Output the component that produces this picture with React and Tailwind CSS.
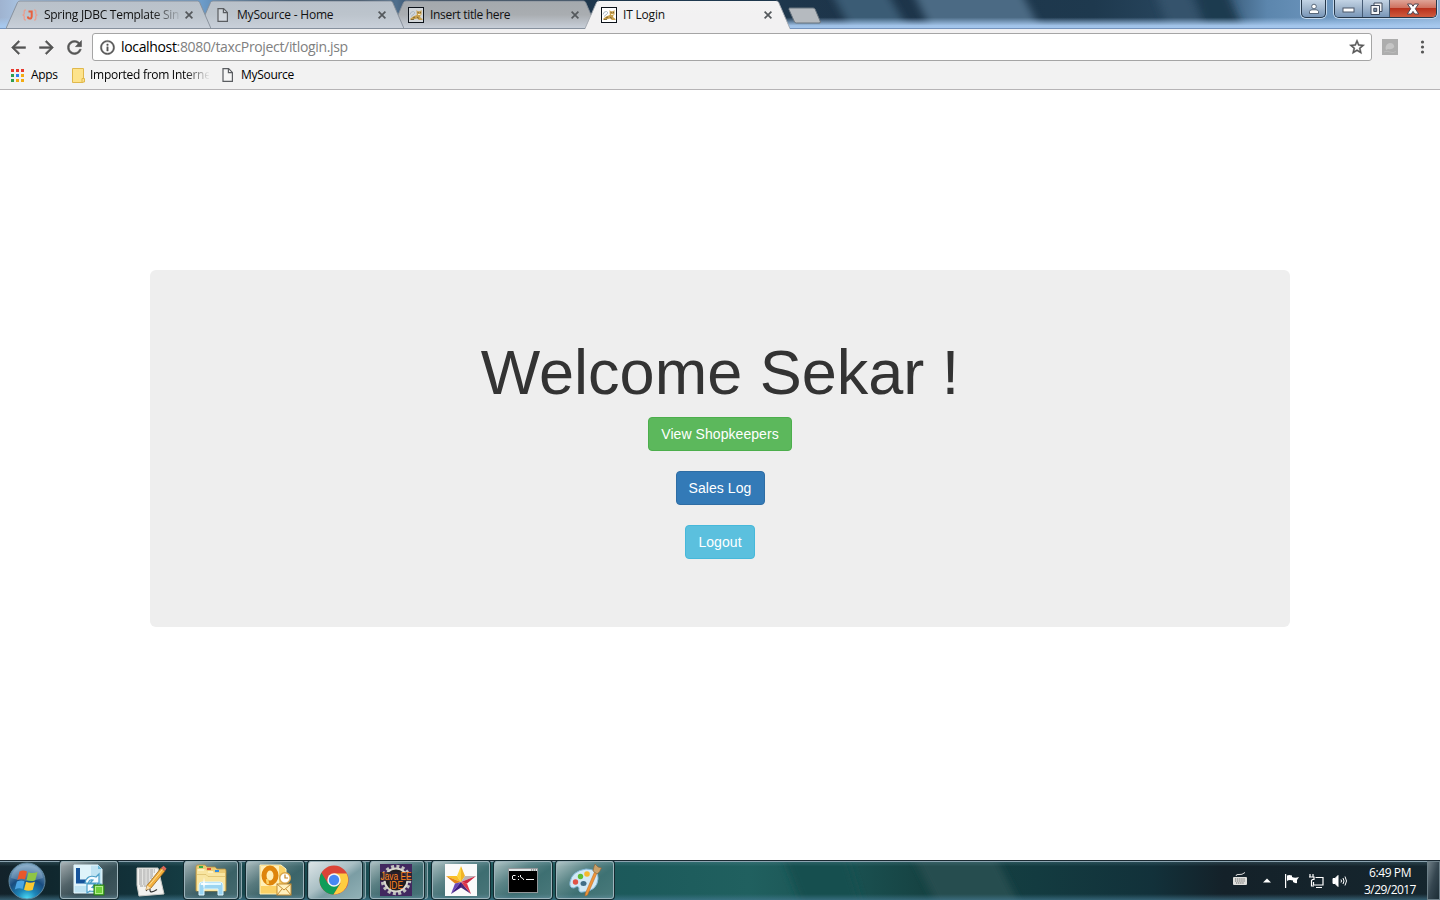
import React from "react";

const uiFont = "font-['Open_Sans','Noto_Sans',sans-serif]";

function TitleGlass() {
  return (
    <svg className="absolute inset-0" width="1440" height="29" viewBox="0 0 1440 29" preserveAspectRatio="none" aria-hidden="true">
      <defs>
        <linearGradient id="tg" x1="0" x2="1440" y1="0" y2="0" gradientUnits="userSpaceOnUse">
          <stop offset="0" stopColor="#9fb3d0" />
          <stop offset="0.015" stopColor="#a9c4e2" />
          <stop offset="0.06" stopColor="#86aed8" />
          <stop offset="0.14" stopColor="#6d9cc9" />
          <stop offset="0.2" stopColor="#24445f" />
          <stop offset="0.25" stopColor="#2a4158" />
          <stop offset="0.275" stopColor="#4f6f8d" />
          <stop offset="0.3" stopColor="#1c3146" />
          <stop offset="0.48" stopColor="#1f3a50" />
          <stop offset="0.6" stopColor="#1d3449" />
          <stop offset="0.76" stopColor="#1e394e" />
          <stop offset="0.84" stopColor="#2c4b65" />
          <stop offset="0.88" stopColor="#5c86ad" />
          <stop offset="0.93" stopColor="#7099c1" />
          <stop offset="1" stopColor="#8db1d6" />
        </linearGradient>
        <linearGradient id="tglow" x1="0" x2="0" y1="0" y2="1">
          <stop offset="0.6" stopColor="#a6c8ee" stopOpacity="0" />
          <stop offset="0.88" stopColor="#a6c8ee" stopOpacity="0.95" />
          <stop offset="1" stopColor="#a6c8ee" />
        </linearGradient>
        <filter id="tb" x="-20%" y="-50%" width="140%" height="200%">
          <feGaussianBlur stdDeviation="5 1" />
        </filter>
      </defs>
      <rect width="1440" height="29" fill="url(#tg)" />
      <g filter="url(#tb)">
        <polygon points="832,-6 888,-6 910,32 852,32" fill="#3b5b74" />
        <polygon points="914,-6 1022,-6 1042,32 932,32" fill="#4c6a84" />
        <polygon points="1156,-6 1190,-6 1206,32 1170,32" fill="#34536c" />
        <polygon points="1194,-6 1228,-6 1244,32 1206,32" fill="#1f3a50" />
      </g>
      <rect width="1440" height="29" fill="url(#tglow)" />
      <rect y="28" width="1440" height="1" fill="#7493bd" />
    </svg>
  );
}

function SpringIcon() {
  return (
    <svg width="16" height="16" viewBox="0 0 16 16" fill="none">
      <path d="M3.800 3Q2 3 2.200 5Q2.600 8 .6 8Q2.600 8 2.200 11Q2 13 3.800 13M12.200 3Q14 3 13.800 5Q13.400 8 15.400 8Q13.400 8 13.800 11Q14 13 12.200 13" stroke="#ea9d8e" strokeWidth="1.300" />
      <path d="M6.500 4.500H9.700V9.500Q9.500 11.800 7.600 11.600Q5.900 11.500 5.900 9.500" stroke="#e8603f" strokeWidth="2" />
    </svg>
  );
}

function FileIcon() {
  return (
    <svg width="16" height="16" viewBox="0 0 16 16" fill="none" stroke="#5a5d61" strokeWidth="1.200">
      <path d="M3 1.600H8.600L12.400 5.400V14.400H3Z" fill="#ffffff" fillOpacity=".3" />
      <path d="M8.400 1.900V5.600H12.300" />
    </svg>
  );
}

function TomcatIcon({ active }) {
  return (
    <svg width="16" height="16" viewBox="0 0 16 16">
      <rect x=".5" y=".5" width="15" height="15" fill={active ? "#fff" : "#d3d7da"} stroke="#0c1219" strokeWidth="1" />
      <path d="M8.500 3L9.800 4.300H12L13.500 3V7.500L12 9L12.500 10.500L14.500 12V13H11L9 11.500L5 12.500L2.500 13L2 12L5 9.500L8.800 8Z" fill="#c9a04c" />
      <path d="M2 7.500Q3 4 5.500 4.500Q7 5 6.500 6.500L3 9.500" stroke="#a9b6c0" strokeWidth="1" fill="none" />
      <path d="M9.700 5.500H10.700M12 5.500H13M5 11L7 10M9 10L11 11.500M3 12.500H6" stroke="#6d5b2e" strokeWidth=".8" />
      <path d="M10 7.500H12.500" stroke="#f7efd0" strokeWidth="1" />
    </svg>
  );
}

function CloseX() {
  return (
    <svg width="8" height="8" viewBox="0 0 8 8" stroke="#54585c" strokeWidth="1.700">
      <path d="M.6.6L7.400 7.400M7.400.6L.6 7.400" />
    </svg>
  );
}

function Tab({ title, icon, active, layer, fill, tracking, fade }) {
  return (
    <div className={`relative flex h-[29px] w-[205px] shrink-0 items-center pl-4 ${layer}`}>
      <svg className="absolute inset-0" width="205" height="29" viewBox="0 0 205 29" aria-hidden="true">
        <defs>
          <linearGradient id={fill} x1="0" x2="0" y1="0" y2="1">
            <stop offset="0" stopColor={active ? "#f3f3f3" : fill === "tabC" ? "#a4a9ad" : "#b9c1ca"} />
            <stop offset=".5" stopColor={active ? "#f2f1f2" : fill === "tabC" ? "#a9adb1" : "#bcc4cc"} />
            <stop offset="1" stopColor={active ? "#f2f1f2" : "#c9d0da"} />
          </linearGradient>
        </defs>
        <path d={active ? "M0 29L11.500 2.500Q12.300 1 14 1H191.500Q193 1 193.700 2.500L205 29Z" : "M0 28.500L11.500 2.500Q12.300 1 14 1H191.500Q193 1 193.700 2.500L205 28.500Z"} fill={`url(#${fill})`} />
        <path d={active ? "M0 28.500L11.500 2.500Q12.300 1 14 1M191.500 1Q193 1 193.700 2.500L205 28.500" : "M205 28.500H0L11.500 2.500Q12.300 1 14 1H191.500Q193 1 193.700 2.500L205 28.500"} fill="none" stroke={active ? "#a3a8af" : "#858d99"} strokeWidth=".9" />
      </svg>
      <span className="relative">{icon}</span>
      <span className={`relative ml-[6px] w-[136px] text-[12px] leading-[18px] whitespace-nowrap text-[#111] ${tracking} ${fade ? "[mask-image:linear-gradient(to_right,black_108px,transparent_138px)]" : ""}`}>{title}</span>
      <span className="relative ml-[5px]"><CloseX /></span>
    </div>
  );
}

function WindowControls() {
  const glass = "bg-linear-to-b from-[#c3d4e5] via-[#a3b8ce] via-45% to-[#7896b8]";
  return (
    <div className="relative ml-auto flex h-[19px] pr-[3px]">
      <div className={`mr-[6px] flex h-[18px] w-[25px] items-center justify-center rounded-b-[5px] border border-t-0 border-[#26384a] shadow-[0_0_0_1px_#c4d8ec] ${glass}`}>
        <svg width="12" height="12" viewBox="0 0 12 12" fill="#fff" stroke="#3c4c60" strokeWidth=".8">
          <circle cx="6" cy="3.500" r="2.300" />
          <path d="M1.500 10.500V8.500Q2 6.800 4 6.800H8Q10 6.800 10.500 8.500V10.500Z" />
        </svg>
      </div>
      <div className="ml-[2px] flex h-[18px] overflow-hidden rounded-b-[5px] border border-t-0 border-[#26384a] shadow-[0_0_0_1px_#c4d8ec]">
        <div className={`flex w-[28px] items-center justify-center border-r border-[#455b74] pt-[3px] ${glass}`}>
          <svg width="13" height="6" viewBox="0 0 13 6"><rect x="1" y="1" width="11" height="4" fill="#fff" stroke="#4b5668" /></svg>
        </div>
        <div className={`flex w-[27px] items-center justify-center border-r border-[#455b74] ${glass}`}>
          <svg width="13" height="13" viewBox="0 0 13 13" fill="#f4f6f8" stroke="#3f4a5c" strokeWidth="1">
            <path d="M4 1H12V9.500H4Z" /><path d="M1 3.500H9.500V12.500H1Z" /><path d="M3.800 6.300H6.700V9.500H3.800Z" fill="#7b8fa8" />
          </svg>
        </div>
        <div className="flex w-[46px] items-center justify-center bg-[linear-gradient(to_bottom,#dfa497_0%,#cf7260_45%,#b9321d_50%,#cf5b3e_100%)]">
          <svg width="14" height="12" viewBox="0 0 14 12"><path d="M1.500 1H5.500L7 3.300L8.500 1H12.500L9.300 5.700L12.700 11H8.700L7 8.400L5.300 11H1.300L4.700 5.700Z" fill="#fff" stroke="#4f4652" strokeWidth="1" /></svg>
        </div>
      </div>
    </div>
  );
}

function MaterialIcon({ d, size }) {
  return <svg width={size} height={size} viewBox="0 0 24 24" fill="#555" stroke="#555" strokeWidth=".6"><path d={d} /></svg>;
}

const paths = {
  back: "M20 11H7.83l5.59-5.59L12 4l-8 8 8 8 1.41-1.41L7.83 13H20v-2z",
  forward: "M12 4l-1.41 1.41L16.17 11H4v2h12.17l-5.58 5.59L12 20l8-8z",
  reload: "M17.65 6.35C16.2 4.9 14.21 4 12 4c-4.42 0-7.99 3.58-7.99 8s3.57 8 7.99 8c3.73 0 6.84-2.55 7.73-6h-2.08c-.82 2.33-3.04 4-5.65 4-3.31 0-6-2.69-6-6s2.69-6 6-6c1.66 0 3.14.69 4.22 1.78L13 11h7V4l-2.35 2.35z",
  info: "M11 17h2v-6h-2v6zm1-15C6.48 2 2 6.48 2 12s4.48 10 10 10 10-4.48 10-10S17.52 2 12 2zm0 18c-4.41 0-8-3.59-8-8s3.59-8 8-8 8 3.59 8 8-3.59 8-8 8zM11 9h2V7h-2v2z",
  star: "M22 9.24l-7.19-.62L12 2 9.19 8.63 2 9.24l5.46 4.73L5.82 21 12 17.27 18.18 21l-1.63-7.03L22 9.24zM12 15.400l-3.760 2.270 1-4.280-3.320-2.880 4.380-.380L12 6.100l1.710 4.040 4.380.380-3.320 2.880 1 4.280L12 15.400z",
};

function Toolbar() {
  return (
    <div className="flex h-8 items-center bg-[#f2f1f2] pt-1 pl-[7.5px]">
      <div className="flex w-[84.500px] items-center gap-[7px]">
        <MaterialIcon d={paths.back} size="21" />
        <MaterialIcon d={paths.forward} size="21" />
        <MaterialIcon d={paths.reload} size="21" />
      </div>
      <div className="flex h-7 w-[1280px] items-center rounded-[3px] border border-[#a5a5a5] bg-white pr-[5px] pl-[5.500px]">
        <MaterialIcon d={paths.info} size="17" />
        <span className="ml-[5.500px] text-[14px] leading-5 tracking-[-0.34px] text-[#808080]"><span className="text-black">localhost</span>:8080/taxcProject/itlogin.jsp</span>
        <span className="ml-auto"><MaterialIcon d={paths.star} size="18" /></span>
      </div>
      <svg className="ml-[10px]" width="16" height="16" viewBox="0 0 16 16">
        <rect width="16" height="16" fill="#adadad" />
        <path d="M3.500 9Q4 4.500 8 4Q12 4.200 12.300 8Q10 11 6 10L4 11Z" fill="#c5c5c5" />
        <path d="M2 13Q5 11.500 8 13T14 12.500" stroke="#bbb" fill="none" />
      </svg>
      <svg className="ml-[22px]" width="5" height="14" viewBox="0 0 5 14" fill="#555"><circle cx="2.500" cy="2" r="1.600" /><circle cx="2.500" cy="7" r="1.600" /><circle cx="2.500" cy="12" r="1.600" /></svg>
    </div>
  );
}

function Bookmarks() {
  const dots = ["#e8392f", "#e8392f", "#e8392f", "#2e9e4f", "#2d7ff0", "#f3ab10", "#2e9e4f", "#f3ab10", "#f3ab10"];
  return (
    <div className="flex h-[29px] items-center border-b border-[#b6b4b6] bg-[#f2f2f2] pl-[11px] text-[12px] leading-[18px] text-black">
      <div className="grid grid-cols-3 gap-[2px]">
        {dots.map((c, i) => <span key={i} className="size-[3px]" style={{ backgroundColor: c }} />)}
      </div>
      <span className="ml-[7px] w-[41px] tracking-[-0.3px]">Apps</span>
      <svg width="13" height="15" viewBox="0 0 13 15"><path d="M.5.5H11.500V10L12.500 10.500V14H11V14.500H.5Z" fill="#fde38c" stroke="#e0b84c" /><path d="M10 14V10.500H12" stroke="#e0b84c" fill="none" /></svg>
      <span className="ml-[5px] w-[119px] whitespace-nowrap tracking-[-0.28px] [mask-image:linear-gradient(to_right,black_94px,transparent_120px)]">Imported from Interne</span>
      <span className="ml-[11px]"><FileIcon /></span>
      <span className="ml-[5px] tracking-[-0.3px]">MySource</span>
    </div>
  );
}

function WelcomePage() {
  const btn = "h-[34px] rounded-[4px] border text-[14px] leading-5 tracking-[0.06px] text-white";
  return (
    <main className="h-[770px] bg-white px-[150px] pt-[180px] font-['Liberation_Sans',Arial,sans-serif]">
      <section className="flex h-[357px] flex-col items-center rounded-[6px] bg-[#eee] pt-[68px]">
        <h1 className="mb-[10px] h-[69px] text-[63px] leading-[69px] font-normal whitespace-nowrap text-[#333]">Welcome Sekar !</h1>
        <div className="flex flex-col items-center gap-5">
          <button className={`${btn} w-[144px] border-[#4cae4c] bg-[#5cb85c]`}>View Shopkeepers</button>
          <button className={`${btn} w-[89px] border-[#2e6da4] bg-[#337ab7]`}>Sales Log</button>
          <button className={`${btn} w-[70px] border-[#46b8da] bg-[#5bc0de]`}>Logout</button>
        </div>
      </section>
    </main>
  );
}

function TaskbarGlass() {
  return (
    <svg className="absolute inset-0" width="1440" height="40" viewBox="0 0 1440 40" aria-hidden="true">
      <defs>
        <linearGradient id="kg" x1="0" x2="1440" y1="0" y2="0" gradientUnits="userSpaceOnUse">
          <stop offset="0" stopColor="#13222a" />
          <stop offset=".035" stopColor="#10272e" />
          <stop offset=".09" stopColor="#123139" />
          <stop offset=".16" stopColor="#17454b" />
          <stop offset=".3" stopColor="#1c5257" />
          <stop offset=".44" stopColor="#1c5a5b" />
          <stop offset=".52" stopColor="#20605f" />
          <stop offset=".58" stopColor="#1b5454" />
          <stop offset=".64" stopColor="#164343" />
          <stop offset=".72" stopColor="#133b40" />
          <stop offset=".8" stopColor="#12313a" />
          <stop offset=".85" stopColor="#142129" />
          <stop offset="1" stopColor="#15262e" />
        </linearGradient>
        <linearGradient id="kb" x1="0" x2="0" y1="0" y2="1">
          <stop offset="0" stopColor="#6e9aa8" stopOpacity=".35" />
          <stop offset=".16" stopColor="#6e9aa8" stopOpacity="0" />
          <stop offset=".85" stopColor="#467b93" stopOpacity="0" />
          <stop offset="1" stopColor="#467b93" stopOpacity=".65" />
        </linearGradient>
        <filter id="kf"><feGaussianBlur stdDeviation="4 1" /></filter>
      </defs>
      <rect width="1440" height="40" fill="url(#kg)" />
      <g filter="url(#kf)">
        <polygon points="912,-6 994,-6 1020,46 938,46" fill="#264e50" />
        <polygon points="782,-6 846,-6 862,46 802,46" fill="#195050" />
      </g>
      <rect width="1440" height="40" fill="url(#kb)" />
      <rect width="1440" height="1" fill="#1a2831" />
      <rect y="1" width="1440" height="1" fill="#8ba3b0" />
    </svg>
  );
}

function StartOrb() {
  return (
    <svg width="38" height="38" viewBox="0 0 38 38">
      <defs>
        <radialGradient id="orb" cx=".5" cy="1" r=".95">
          <stop offset="0" stopColor="#4fe0f8" /><stop offset=".28" stopColor="#1d86b9" /><stop offset=".6" stopColor="#194c7f" /><stop offset="1" stopColor="#7fa6c4" />
        </radialGradient>
      </defs>
      <circle cx="19" cy="19" r="18" fill="url(#orb)" stroke="#5f869d" />
      <path d="M3 16Q5 4 19 3Q33 4 35 16Q19 22 3 16Z" fill="#c6dcec" fillOpacity=".25" />
      <path d="M11.500 9.500Q15 7.500 19 9.500L17 17.500Q13 16 9.300 18Z" fill="#ea572a" />
      <path d="M20.500 10.200Q25 12 29.500 10L27.300 18.200Q23 20 18.500 18Z" fill="#8fc545" />
      <path d="M8.900 19.500Q13 17.500 16.600 19.200L14.600 27Q11 25.500 6.800 27.500Z" fill="#4ba5e4" />
      <path d="M18.100 19.800Q22.500 21.700 26.900 19.700L24.700 28Q20 29.500 16 27.700Z" fill="#fbc930" />
    </svg>
  );
}

function LyncIcon() {
  return (
    <svg width="32" height="32" viewBox="0 0 32 32">
      <path d="M1 1H25L29 5V29H1Z" fill="#bfe3f2" stroke="#e9faff" />
      <path d="M25 1V5H29Z" fill="#6bb8d8" />
      <path d="M1 1H18V22H1Z" fill="#dff3fa" />
      <path d="M5 4V17.500H13" fill="none" stroke="#16549b" strokeWidth="4" />
      <path d="M12 19Q14 10 23 13L26 10V19H17L20 16Q16 15 15.500 19ZM28 20Q26 29 17 27L14 29V20H22L19 23.500Q23 24 24.500 20Z" fill="#f4fbff" stroke="#4b9ec7" strokeWidth="1.200" />
      <rect x="21" y="21" width="10" height="10" fill="#63c531" stroke="#257a1b" strokeWidth="1" /><rect x="22.500" y="22.500" width="7" height="7" fill="#6fd13b" stroke="#b4ee90" strokeWidth="1" />
    </svg>
  );
}

function NotepadIcon() {
  return (
    <svg width="32" height="32" viewBox="0 0 32 32">
      <path d="M2 3H23L29 29L4 31L2 20Z" fill="#f2f2f0" stroke="#c9c9c5" />
      <path d="M4 5H20M4 7H20M4 9H18M4 11H18M4 13H17M4 15H15M4 17H14M4 19H13M5 21H12" stroke="#9b9b9b" strokeWidth="1" strokeDasharray="3 .7" />
      <path d="M11 26Q15 21 15 25T22 24.500" stroke="#333" strokeWidth="1.200" fill="none" />
      <path d="M12 20.500L26 3L30 6L16 23L11 25Z" fill="#f4b03d" stroke="#97651c" strokeWidth=".8" />
      <path d="M26 3L28.500 .8L31.500 3.500L30 6Z" fill="#dc6859" /><path d="M12 20.500L16 23L11 25Z" fill="#f7dfb4" />
      <path d="M14 20.500L27.500 4.500" stroke="#fbe19a" />
    </svg>
  );
}

function ExplorerIcon() {
  return (
    <svg width="32" height="32" viewBox="0 0 32 32">
      <path d="M1 3Q1 1 3 1H10L12 3H20L22 5H30Q31 5 31 7V27H1Z" fill="#ebcc77" stroke="#b8903e" strokeWidth=".8" />
      <path d="M2 5H10L12 7H18L20 9H30V27H2Z" fill="#f8e5a1" />
      <path d="M2 10.500H11L13 12.500H30" stroke="#d9ba66" strokeWidth=".7" fill="none" />
      <path d="M3 6H9M13 8H18" stroke="#fffbe0" strokeWidth="1.200" />
      <rect x="4" y="2" width="4" height="2" fill="#31ad45" /><rect x="12" y="4" width="4" height="2" fill="#de4c35" /><rect x="20" y="6" width="4" height="2" fill="#328de0" />
      <path d="M4 31V21Q4 18 7 18H25Q28 18 28 21V31H23V25H9V31Z" fill="#9bd5f2" stroke="#dff6ff" />
      <path d="M6 20H26" stroke="#e4f9ff" strokeWidth="2" /><path d="M9 13L10 19L15 20L10 21L9 26L8 21L4 20L8 19Z" fill="#fff" fillOpacity=".8" />
    </svg>
  );
}

function OutlookIcon() {
  return (
    <svg width="33" height="32" viewBox="0 0 33 32">
      <path d="M1 1H22L27 5V30H1Z" fill="#fbd165" stroke="#fff3c2" />
      <rect x="2" y="2" width="18" height="20" fill="#fff0ba" />
      <ellipse cx="11" cy="11.500" rx="6" ry="7.500" fill="none" stroke="#de850c" strokeWidth="5" />
      <path d="M8 15L9 20" stroke="#fbd165" strokeWidth="2.500" />
      <circle cx="26" cy="14" r="5.300" fill="#fff" stroke="#dba64a" strokeWidth="1.500" /><path d="M26 10.500V14H29" fill="none" stroke="#c38325" strokeWidth="1.200" />
      <rect x="18" y="20" width="14" height="11" fill="#fff0bc" stroke="#c48c33" /><path d="M18 20L25 26L32 20M18 31L23 25M32 31L27 25" fill="none" stroke="#c48c33" />
    </svg>
  );
}

function ChromeIcon() {
  return (
    <svg className="mr-[2px]" width="30" height="30" viewBox="0 0 30 30">
      <circle cx="15" cy="15" r="14.500" fill="#da4437" />
      <path d="M2.400 7.800A14.500 14.500 0 0 0 14.500 29.500L21 18.700L15 15L9 18.500Z" fill="#109d59" />
      <path d="M27.600 8.500H15L21.500 18.200L14.500 29.500A14.500 14.500 0 0 0 27.600 8.500Z" fill="#fecd41" />
      <circle cx="15" cy="15" r="6.700" fill="#f5f5f5" /><circle cx="15" cy="15" r="5.200" fill="#4688f4" />
    </svg>
  );
}

function JavaIcon() {
  return (
    <svg className="mr-[2px]" width="32" height="32" viewBox="0 0 32 32">
      <rect width="32" height="32" fill="#41285f" />
      <circle cx="16" cy="16" r="13.500" fill="none" stroke="#bfc1be" strokeWidth="3.500" strokeDasharray="3 2.300" />
      <circle cx="16" cy="16" r="11.500" fill="#201d21" stroke="#d9d8cf" strokeWidth="2" />
      <rect y="8" width="32" height="9" fill="#29202b" fillOpacity=".85" />
      <text x=".5" y="16" fontFamily="Liberation Sans, sans-serif" fontSize="10" fill="#ff831e" textLength="31" lengthAdjust="spacingAndGlyphs">Java EE</text>
      <text x="9" y="24.500" fontFamily="Liberation Sans, sans-serif" fontSize="10" fill="#ff831e" textLength="14" lengthAdjust="spacingAndGlyphs">IDE</text>
    </svg>
  );
}

function StarIcon() {
  return (
    <svg width="32" height="32" viewBox="0 0 32 32">
      <rect width="32" height="32" fill="#fafafa" />
      <path d="M16 2L12 12L16 18Z" fill="#ffd43c" /><path d="M16 2L20 12L16 18Z" fill="#f0b428" />
      <path d="M1 12H12L16 18Z" fill="#f9bf27" /><path d="M1 12L10 19.500L16 18Z" fill="#e58517" />
      <path d="M31 12H20L16 18Z" fill="#b9b4b8" /><path d="M31 12L22 19.500L16 18Z" fill="#cf2841" />
      <path d="M10 19.500L6 30L16 18Z" fill="#6a45b5" /><path d="M6 30L16 23.500V18Z" fill="#3f1a80" />
      <path d="M16 23.500L26 30L16 18Z" fill="#4e2a78" /><path d="M22 19.500L26 30L16 18Z" fill="#df364b" />
    </svg>
  );
}

function TerminalIcon() {
  return (
    <svg width="30" height="25" viewBox="0 0 30 25">
      <rect x=".5" y=".5" width="29" height="24" fill="#000" stroke="#92979a" />
      <rect x="1" y="1" width="28" height="2" fill="#e2e5e6" /><path d="M23 2H28" stroke="#555" strokeDasharray="1.200 .8" />
      <path d="M7.500 7.500H5L4.500 8V11L5 11.500H7.500M10.500 8V9M10.500 11V12M12.500 7V9L15.500 11V12M18 11.500H26" fill="none" stroke="#f3f3f3" strokeWidth="1" />
    </svg>
  );
}

function PaintIcon() {
  return (
    <svg width="34" height="34" viewBox="0 0 34 34">
      <path d="M2 19Q4 8 18 6Q31 6 30 16Q29 28 15 29Q10 30 11 25Q10 22 6 25Q1 25 2 19Z" fill="#d2e9f6" stroke="#83b8d8" />
      <ellipse cx="15.500" cy="20.500" rx="3" ry="2.500" fill="#416d86" />
      <circle cx="7.500" cy="19" r="2.700" fill="#e15347" /><circle cx="12.500" cy="13.500" r="2.700" fill="#5fbd34" /><circle cx="19" cy="11" r="2.800" fill="#f6b92d" />
      <path d="M26.500 9L29 10L19.500 32L17 33L17.500 30Z" fill="#ee943a" stroke="#b66622" strokeWidth=".5" />
      <path d="M25 8Q26 3 27 1L30 4L33.500 5Q32 9 29 11Z" fill="#c9a16a" stroke="#8c6337" strokeWidth=".6" />
    </svg>
  );
}

function TaskButton({ children, active, stacked, plain }) {
  if (plain) return <div className="flex h-[39px] w-[58px] items-center justify-center">{children}</div>;
  const tone = active
    ? "bg-[linear-gradient(145deg,#dbe4e6_0%,#a9bfc4_45%,#7b9da4_60%,#91b1b6_100%)]"
    : "bg-[linear-gradient(145deg,rgba(255,255,255,.62)_0%,rgba(255,255,255,.28)_35%,rgba(255,255,255,.15)_60%,rgba(255,255,255,.2)_100%)]";
  return (
    <div className="flex h-[39px] w-[58px]">
      <div className={`flex h-[38px] items-center justify-center rounded-[3px] border border-[#9db4bb] shadow-[0_0_0_1px_#142b31] ${stacked ? "w-[54px]" : "w-[58px]"} ${tone}`}>{children}</div>
      {stacked && <div className="ml-[1px] h-[38px] w-[3px] rounded-r-[3px] border-y border-r border-[#8ca6ae] bg-[#66838a]/50" />}
    </div>
  );
}

function Tray() {
  return (
    <div className="relative ml-auto flex h-[39px] items-center">
      <svg className="mb-[4px]" width="16" height="14" viewBox="0 0 16 14"><path d="M4 4Q4 2 7 2.500T13 .5" fill="none" stroke="#ddd" /><rect x="1" y="5" width="14" height="8" rx="1" fill="#e0e0dd" /><path d="M3 7H13M3 9H13M4 11H12" stroke="#666" strokeDasharray="1.300 .8" /></svg>
      <svg className="ml-[15px]" width="8" height="5" viewBox="0 0 8 5"><path d="M4 .5L8 4.500H0Z" fill="#fff" /></svg>
      <svg className="ml-[13px]" width="16" height="16" viewBox="0 0 16 16" fill="#fff"><rect x="1" y="1" width="1.200" height="14" /><path d="M3 2.500Q5 1.500 8 2.500V4Q11 5.500 15 4L13 7L13 10Q11 10.500 9 9V7.500Q5 6.500 3 8Z" /></svg>
      <svg className="ml-[8px]" width="17" height="16" viewBox="0 0 17 16" fill="none" stroke="#fff" strokeWidth="1.200"><path d="M7.500 4.500H15V12H5.500V9M8 14.500H14" /><path d="M2 1V4M5 1V4M1 4H6V6.500H4.500L3.500 7.500V13H6" /></svg>
      <svg className="ml-[7px]" width="16" height="16" viewBox="0 0 16 16" fill="none" stroke="#fff" strokeWidth="1"><path d="M1 5.500H3L6 2.500V13.500L3 10.500H1Z" fill="#fff" /><path d="M9 6.500Q10 8 9 9.500M11 5Q13 8 11 11M13 3.500Q16 8 13 12.500" /></svg>
      <div className="ml-[9px] w-[66px] text-center text-[12px] leading-[17px] text-white">
        <div className="tracking-[-0.4px]">6:49 PM</div>
        <div className="tracking-[-0.55px]">3/29/2017</div>
      </div>
      <div className="ml-[4px] h-[39px] w-[13px] border border-[#6d8089] bg-linear-to-br from-[#718087] via-[#354650] to-[#1c2d35]" />
    </div>
  );
}

export default function App() {
  return (
    <div className={`h-[900px] w-[1440px] overflow-hidden bg-white ${uiFont}`}>
      <header>
        <div className="relative flex h-[29px]">
          <TitleGlass />
          <div className="relative flex -space-x-3 pl-[6px]">
            <Tab title="Spring JDBC Template Sin" icon={<SpringIcon />} layer="z-30" fill="tabA" tracking="tracking-[-0.28px]" fade />
            <Tab title="MySource - Home" icon={<FileIcon />} layer="z-20" fill="tabB" tracking="tracking-[-0.2px]" />
            <Tab title="Insert title here" icon={<TomcatIcon />} layer="z-10" fill="tabC" tracking="tracking-[-0.32px]" />
            <Tab title="IT Login" icon={<TomcatIcon active />} layer="z-40" fill="tabD" tracking="tracking-[-0.2px]" active />
          </div>
          <svg className="relative mt-[7px] -ml-[2px]" width="34" height="17" viewBox="0 0 34 17"><path d="M1.500 1H25Q26.500 1 27 2L32.500 15Q32.500 16 31 16H8.500Q7 16 6.500 15L1 2.500Q.7 1.200 1.500 1Z" fill="#b5babf" stroke="#69747e" /></svg>
          <WindowControls />
        </div>
        <Toolbar />
        <Bookmarks />
      </header>
      <WelcomePage />
      <footer className="relative flex h-10 items-start pt-[1px]">
        <TaskbarGlass />
        <div className="relative flex h-[39px] w-[60px] items-center pl-2"><StartOrb /></div>
        <div className="relative flex gap-1">
          <TaskButton><LyncIcon /></TaskButton>
          <TaskButton plain><NotepadIcon /></TaskButton>
          <TaskButton stacked><ExplorerIcon /></TaskButton>
          <TaskButton><OutlookIcon /></TaskButton>
          <TaskButton active stacked><ChromeIcon /></TaskButton>
          <TaskButton stacked><JavaIcon /></TaskButton>
          <TaskButton><StarIcon /></TaskButton>
          <TaskButton><TerminalIcon /></TaskButton>
          <TaskButton><PaintIcon /></TaskButton>
        </div>
        <Tray />
      </footer>
    </div>
  );
}
